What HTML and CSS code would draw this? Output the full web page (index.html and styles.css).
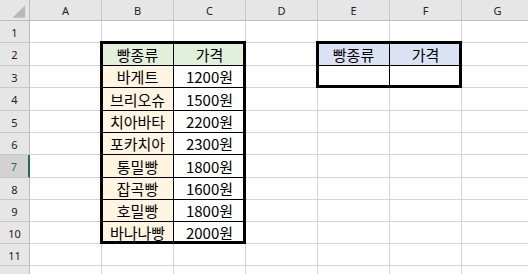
FILE: index.html
```html
<!DOCTYPE html>
<html lang="ko">

<head>
    <meta charset="UTF-8">
    <meta name="viewport" content="width=device-width, initial-scale=1.0">
    <title>빵 가격표</title>
    <link rel="stylesheet" href="styles.css">
</head>

<body>
    <div class="sheet">
        <!-- column headers -->
        <div class="corner">
            <svg width="30" height="21" viewBox="0 0 30 21"><polygon points="26,5 26,18 13,18" fill="#b8b8b8"/></svg>
        </div>
        <div class="col-head">A</div>
        <div class="col-head">B</div>
        <div class="col-head">C</div>
        <div class="col-head">D</div>
        <div class="col-head">E</div>
        <div class="col-head">F</div>
        <div class="col-head">G</div>

        <!-- row 1 -->
        <div class="row-head">1</div>
        <div class="cell"></div><div class="cell"></div><div class="cell"></div><div class="cell"></div>
        <div class="cell"></div><div class="cell"></div><div class="cell"></div>

        <!-- row 2 -->
        <div class="row-head">2</div>
        <div class="cell"></div>
        <div class="cell tbl green">빵종류</div>
        <div class="cell tbl green">가격</div>
        <div class="cell"></div>
        <div class="cell tbl blue">빵종류</div>
        <div class="cell tbl blue">가격</div>
        <div class="cell"></div>

        <!-- row 3 -->
        <div class="row-head">3</div>
        <div class="cell"></div>
        <div class="cell tbl cream">바게트</div>
        <div class="cell tbl">1200원</div>
        <div class="cell"></div>
        <div class="cell tbl"></div>
        <div class="cell tbl"></div>
        <div class="cell"></div>

        <!-- row 4 -->
        <div class="row-head">4</div>
        <div class="cell"></div>
        <div class="cell tbl cream">브리오슈</div>
        <div class="cell tbl">1500원</div>
        <div class="cell"></div><div class="cell"></div><div class="cell"></div><div class="cell"></div>

        <!-- row 5 -->
        <div class="row-head">5</div>
        <div class="cell"></div>
        <div class="cell tbl cream">치아바타</div>
        <div class="cell tbl">2200원</div>
        <div class="cell"></div><div class="cell"></div><div class="cell"></div><div class="cell"></div>

        <!-- row 6 -->
        <div class="row-head">6</div>
        <div class="cell"></div>
        <div class="cell tbl cream">포카치아</div>
        <div class="cell tbl">2300원</div>
        <div class="cell"></div><div class="cell"></div><div class="cell"></div><div class="cell"></div>

        <!-- row 7 -->
        <div class="row-head active">7</div>
        <div class="cell"></div>
        <div class="cell tbl cream">통밀빵</div>
        <div class="cell tbl">1800원</div>
        <div class="cell"></div><div class="cell"></div><div class="cell"></div><div class="cell"></div>

        <!-- row 8 -->
        <div class="row-head">8</div>
        <div class="cell"></div>
        <div class="cell tbl cream">잡곡빵</div>
        <div class="cell tbl">1600원</div>
        <div class="cell"></div><div class="cell"></div><div class="cell"></div><div class="cell"></div>

        <!-- row 9 -->
        <div class="row-head">9</div>
        <div class="cell"></div>
        <div class="cell tbl cream">호밀빵</div>
        <div class="cell tbl">1800원</div>
        <div class="cell"></div><div class="cell"></div><div class="cell"></div><div class="cell"></div>

        <!-- row 10 -->
        <div class="row-head">10</div>
        <div class="cell"></div>
        <div class="cell tbl cream">바나나빵</div>
        <div class="cell tbl">2000원</div>
        <div class="cell"></div><div class="cell"></div><div class="cell"></div><div class="cell"></div>

        <!-- row 11 -->
        <div class="row-head">11</div>
        <div class="cell"></div><div class="cell"></div><div class="cell"></div><div class="cell"></div>
        <div class="cell"></div><div class="cell"></div><div class="cell"></div>

        <!-- row 12 -->
        <div class="row-head">12</div>
        <div class="cell"></div><div class="cell"></div><div class="cell"></div><div class="cell"></div>
        <div class="cell"></div><div class="cell"></div><div class="cell"></div>

        <!-- thick outlines around the two tables -->
        <div class="outline price-list"></div>
        <div class="outline lookup"></div>
    </div>
</body>

</html>
```

FILE: styles.css
```css
/* Global styles */
body {
    margin: 0;
    background: #fff;
    overflow: hidden;
    font-family: "Noto Sans CJK KR", "Noto Sans", sans-serif;
}

/* Worksheet grid */
.sheet {
    position: relative;
    display: grid;
    grid-template-columns: 30px repeat(7, 72px);
    grid-template-rows: 21px 22px 23px 22px 23px 22px 22px 23px 22px 22px 22px 22px 22px;
    width: 534px;
}

.sheet > div {
    box-sizing: border-box;
}

.cell {
    border-right: 1px solid #d4d4d4;
    border-bottom: 1px solid #d4d4d4;
}

/* Headers */
.corner,
.col-head,
.row-head {
    background-color: #e6e6e6;
    color: #222;
    font-family: "Noto Sans", sans-serif;
    font-size: 11px;
    display: flex;
    align-items: center;
    justify-content: center;
}

.corner {
    border-right: 1px solid #bdbdbd;
    border-bottom: 1px solid #bdbdbd;
}

.corner svg {
    display: block;
}

.col-head {
    border-right: 1px solid #c8c8c8;
    border-bottom: 1px solid #bdbdbd;
}

.row-head {
    border-right: 1px solid #bdbdbd;
    border-bottom: 1px solid #c8c8c8;
    padding-top: 1px;
}

.row-head.active {
    background-color: #d2d2d2;
    color: #217346;
    border-right: 2px solid #217346;
}

/* Table cells */
.tbl {
    border-color: #000;
    color: #000;
    font-size: 15px;
    display: flex;
    align-items: center;
    justify-content: center;
    white-space: nowrap;
}

.green {
    background-color: #e2efda;
}

.cream {
    background-color: #fff5e1;
}

.blue {
    background-color: #dae2f3;
}

/* Thick table borders */
.outline {
    position: absolute;
    top: -2px;
    left: -2px;
    right: 0;
    bottom: 0;
    border: 3px solid #000;
    pointer-events: none;
}

.price-list {
    grid-row: 3 / 12;
    grid-column: 3 / 5;
}

.lookup {
    grid-row: 3 / 5;
    grid-column: 6 / 8;
}
```
